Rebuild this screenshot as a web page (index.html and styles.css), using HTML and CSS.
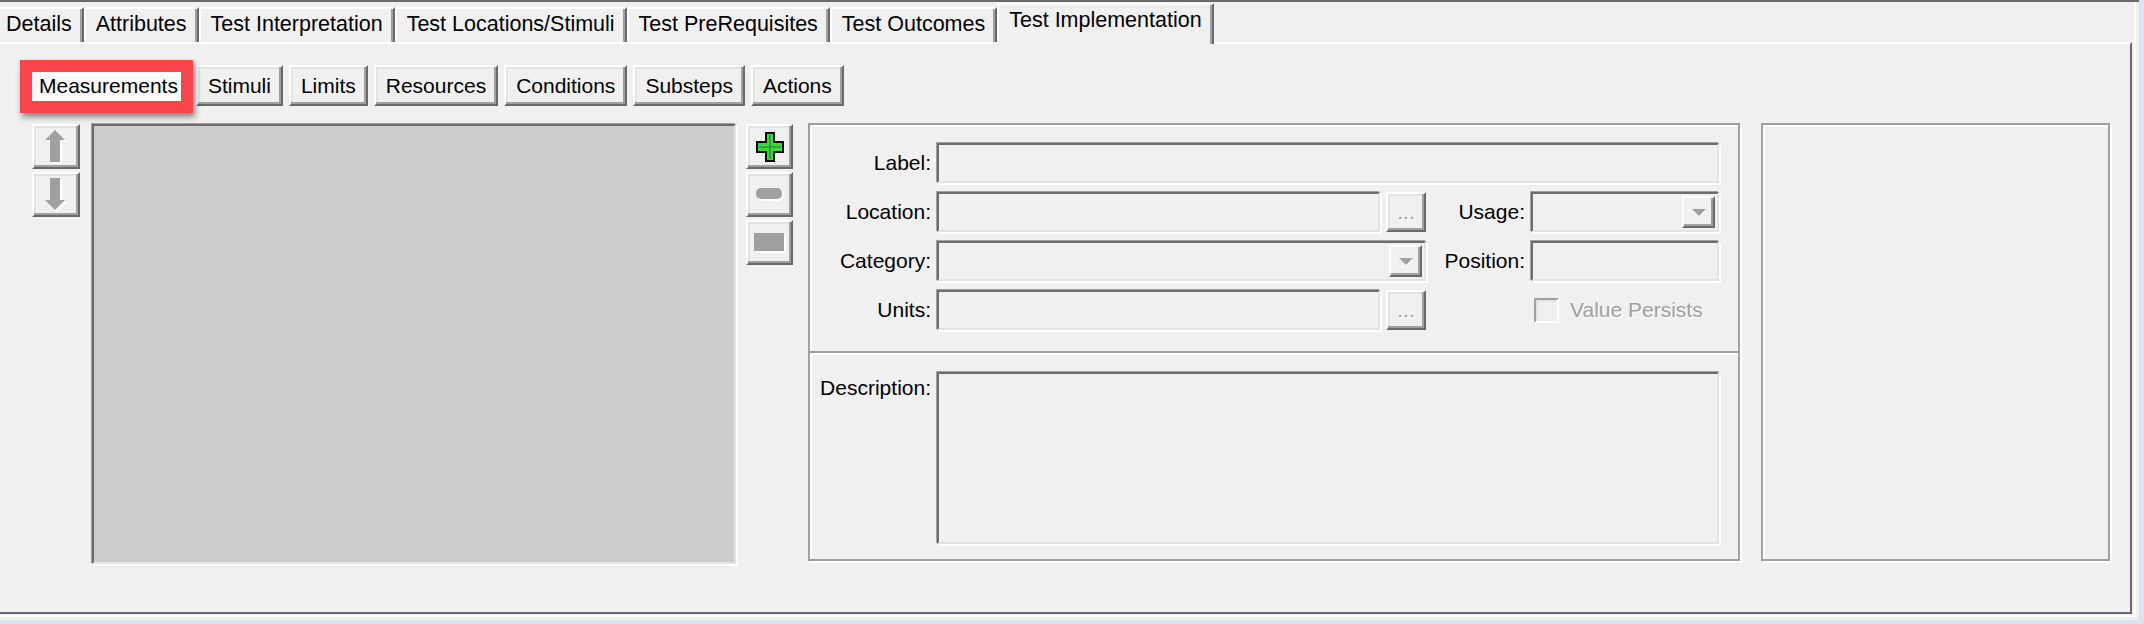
FILE: index.html
```html
<!DOCTYPE html>
<html lang="en">
<head>
    <meta charset="UTF-8">
    <title>Test Implementation</title>
    <link rel="stylesheet" href="styles.css">
</head>
<body>
    <div class="window">
        <div class="tabs">
            <div class="tab">Details</div>
            <div class="tab">Attributes</div>
            <div class="tab">Test Interpretation</div>
            <div class="tab">Test Locations/Stimuli</div>
            <div class="tab">Test PreRequisites</div>
            <div class="tab">Test Outcomes</div>
            <div class="tab active">Test Implementation</div>
        </div>
        <div class="panel">
            <div class="subtabs">
                <button class="btn selected">Measurements<span class="highlight"></span></button>
                <button class="btn">Stimuli</button>
                <button class="btn">Limits</button>
                <button class="btn">Resources</button>
                <button class="btn">Conditions</button>
                <button class="btn">Substeps</button>
                <button class="btn">Actions</button>
            </div>
            <div class="workspace">
                <div class="toolcol">
                    <button class="tool" title="Move up">
                        <svg width="23" height="34" viewBox="0 0 23 34">
                            <polygon points="12,2 22,12 17,12 17,34 7,34 7,12 2,12" fill="#fff"/>
                            <polygon points="10,0 20,10 15,10 15,32 5,32 5,10 0,10" fill="#a0a0a0"/>
                        </svg>
                    </button>
                    <button class="tool" title="Move down">
                        <svg width="23" height="34" viewBox="0 0 23 34">
                            <polygon points="7,2 17,2 17,24 22,24 12,34 2,24 7,24" fill="#fff"/>
                            <polygon points="5,0 15,0 15,22 20,22 10,32 0,22 5,22" fill="#a0a0a0"/>
                        </svg>
                    </button>
                </div>
                <div class="list"></div>
                <div class="toolcol edit">
                    <button class="tool" title="Add">
                        <svg width="28" height="30" viewBox="0 0 28 30">
                            <path d="M10 1h8v9h9v10h-9v9h-8v-9h-9v-10h9z" fill="#2fe02f" stroke="#000" stroke-width="2"/>
                            <path d="M14 3v24M3 15h22" stroke="#3c8c3c" stroke-width="1.5"/>
                        </svg>
                    </button>
                    <button class="tool" title="Remove">
                        <svg width="28" height="13" viewBox="0 0 28 13">
                            <rect x="2" y="2" width="26" height="11" rx="5" fill="#fff"/>
                            <rect x="0" y="0" width="26" height="11" rx="5" fill="#a0a0a0"/>
                        </svg>
                    </button>
                    <button class="tool" title="Clear">
                        <svg width="32" height="20" viewBox="0 0 32 20">
                            <rect x="2" y="2" width="30" height="18" fill="#fff"/>
                            <rect x="0" y="0" width="30" height="18" fill="#a0a0a0"/>
                        </svg>
                    </button>
                </div>
                <div class="group editor">
                    <div class="fields">
                        <label class="lbl">Label:</label>
                        <div class="field wide"></div>

                        <label class="lbl">Location:</label>
                        <div class="field"></div>
                        <button class="btn dots">...</button>
                        <label class="lbl">Usage:</label>
                        <div class="field combo"><span class="drop"><i class="arrow"></i></span></div>

                        <label class="lbl">Category:</label>
                        <div class="field combo span2"><span class="drop"><i class="arrow"></i></span></div>
                        <label class="lbl">Position:</label>
                        <div class="field"></div>

                        <label class="lbl">Units:</label>
                        <div class="field"></div>
                        <button class="btn dots">...</button>
                        <span></span>
                        <div class="check"><span class="box"></span><span class="disabled">Value Persists</span></div>
                    </div>
                    <div class="desc">
                        <label class="lbl top">Description:</label>
                        <div class="field memo"></div>
                    </div>
                </div>
                <div class="group preview"></div>
            </div>
        </div>
    </div>
</body>
</html>
```

FILE: styles.css
```css
* { box-sizing: border-box; }
body { margin: 0; background: #d9e4f1; font-family: "Liberation Sans", Arial, sans-serif; font-size: 21px; color: #000; }

.window { width: 2139px; height: 620px; background: #f0f0f0; border-top: 2px solid #696969; padding: 0 7px 6px 0; box-shadow: inset -3px -3px 0 #f0f0f0, inset -5px -5px 0 #fff; display: flex; flex-direction: column; }

/* tab strip */
.tabs { display: flex; align-items: flex-end; height: 40px; margin-left: -6px; position: relative; z-index: 1; font-size: 21.5px; }
.tab { height: 35px; padding: 0 10px; line-height: 31px; white-space: nowrap; border: 2px solid; border-color: #fff #696969 transparent #fff; border-bottom: 0; box-shadow: inset -2px 0 0 #a0a0a0; }
.tab.active { height: 41px; margin-bottom: -2px; background: #f0f0f0; }

.panel { flex: 1; border-top: 2px solid #fff; border-right: 2px solid #696969; border-bottom: 2px solid #696969; padding-top: 21px; }

/* buttons */
.btn { height: 41px; padding: 0 10px; font: inherit; color: #000; background: #f0f0f0; border: 2px solid; border-color: #fff #696969 #696969 #fff; box-shadow: inset -2px -2px 0 #a0a0a0, inset 2px 2px 0 #e3e3e3; white-space: nowrap; }
.subtabs { display: flex; gap: 6px; padding-left: 27px; }
.btn.selected { position: relative; background: #fafafa; }
.highlight { position: absolute; left: -9px; right: -5px; top: -7px; bottom: -9px; border: 12px solid #f8444a; box-shadow: 2px 4px 6px rgba(0, 0, 0, 0.45); }

.workspace { display: flex; align-items: flex-start; padding-left: 32px; margin-top: 17px; }
.toolcol { display: flex; flex-direction: column; gap: 3px; margin-top: 1px; }
.toolcol.edit { margin-left: 10px; }
.tool { width: 48px; height: 45px; padding: 0; display: flex; align-items: center; justify-content: center; background: #f0f0f0; border: 2px solid; border-color: #fff #696969 #696969 #fff; box-shadow: inset -2px -2px 0 #a0a0a0, inset 2px 2px 0 #e3e3e3; }
.edit .tool { width: 47px; }

.list { width: 644px; height: 440px; margin: 1px 0 0 12px; background: #ccc; border: 2px solid; border-color: #6d6d6d #e3e3e3 #e3e3e3 #6d6d6d; box-shadow: -1px -1px 0 #a0a0a0, 2px 2px 0 #fff; }

/* group boxes */
.group { height: 438px; border: 2px solid #a0a0a0; box-shadow: inset 2px 2px 0 #fff, 2px 2px 0 #fff; }
.editor { width: 932px; margin-left: 15px; }
.preview { width: 349px; margin-left: 21px; }

.fields { display: grid; grid-template-columns: 121px 443px 40px 93px 1fr; grid-auto-rows: 40px; column-gap: 6px; row-gap: 9px; height: 228px; padding: 18px 19px 0 0; border-bottom: 2px solid #a0a0a0; box-shadow: 0 2px 0 #fff; }
.lbl { text-align: right; align-self: center; white-space: nowrap; }
.lbl.top { align-self: start; margin-top: 4px; }
.field { background: #f0f0f0; border: 2px solid; border-color: #6d6d6d #e3e3e3 #e3e3e3 #6d6d6d; box-shadow: -1px -1px 0 #a0a0a0, 2px 2px 0 #fff; }
.field.wide { grid-column: 2 / -1; }
.field.span2 { grid-column: 2 / 4; }
.combo { display: flex; justify-content: flex-end; padding: 2px; }
.drop { width: 33px; display: flex; align-items: center; justify-content: center; border: 2px solid; border-color: #fff #696969 #696969 #fff; box-shadow: inset -2px -2px 0 #a0a0a0; }
.arrow { width: 0; height: 0; border-left: 7px solid transparent; border-right: 7px solid transparent; border-top: 7px solid #a0a0a0; filter: drop-shadow(1px 1px 0 #fff); }
.dots { height: 40px; padding: 0; color: #a0a0a0; text-shadow: 1px 1px 0 #fff; }

.check { display: flex; align-items: center; gap: 11px; padding-left: 3px; }
.box { width: 25px; height: 25px; background: #f0f0f0; border: 2px solid; border-color: #a0a0a0 #fff #fff #a0a0a0; box-shadow: inset 2px 2px 0 #e3e3e3; }
.disabled { color: #a0a0a0; text-shadow: 1px 1px 0 #fff; }

.desc { display: grid; grid-template-columns: 121px 1fr; column-gap: 6px; padding: 19px 19px 0 0; }
.memo { height: 172px; }
```
